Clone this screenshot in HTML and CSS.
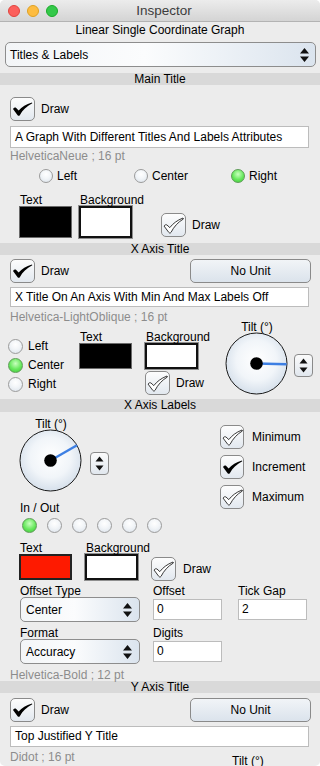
FILE: index.html
```html
<!DOCTYPE html>
<html>
<head>
  <title>Inspector</title>
  <link rel="stylesheet" href="styles.css">
</head>
<body>
  <div class="window">
    <div class="titlebar">
      <div class="lights">
        <span class="light red"></span>
        <span class="light yellow"></span>
        <span class="light green"></span>
      </div>
      <div class="wintitle">Inspector</div>
      <div></div>
    </div>
    <div class="subtitle">Linear Single Coordinate Graph</div>
    <div class="popup top-popup">
      <span>Titles &amp; Labels</span>
      <svg class="updown" width="9" height="14" viewBox="0 0 9 14"><path d="M4.5 0 L9 5.5 H0 Z M0 8.5 H9 L4.5 14 Z" fill="#111"/></svg>
    </div>

    <!-- Main Title -->
    <div class="section s-main">Main Title</div>
    <div class="draw-row r-main">
      <span class="chk">
        <svg width="21" height="16" viewBox="0 0 21 16"><path d="M1 8 C2 6.6 3 6.2 4 6.8 L6.6 9.6 C10 6 14 3.4 20 1.6 L20.3 2.3 C14.5 5.2 10.6 9.2 7.8 14.2 C7.3 15 6.2 15 5.6 14.2 Z" fill="#000"/></svg>
      </span>
      <span>Draw</span>
    </div>
    <div class="field f-main">A Graph With Different Titles And Labels Attributes</div>
    <div class="fontname fn-main">HelveticaNeue ; 16 pt</div>
    <div class="align-row">
      <span class="opt w95"><span class="radio"></span>Left</span>
      <span class="opt w97"><span class="radio"></span>Center</span>
      <span class="opt"><span class="radio on"></span>Right</span>
    </div>
    <div class="colors c-main">
      <div class="well-group"><div class="lbl">Text</div><div class="well black"></div></div>
      <div class="well-group"><div class="lbl">Background</div><div class="well white"></div></div>
      <div class="draw-inline d-main">
        <span class="chk">
          <svg width="21" height="17" viewBox="0 0 21 17"><path d="M1 9 C2 7.8 3 7.4 4 8 L6.8 10.6 C10 6.5 14 3.4 20 1 L20.4 2 C15 5.2 11 9.6 8 15.4 C7.5 16.2 6.4 16.2 5.8 15.4 Z" fill="#fff" stroke="#222" stroke-width="0.9"/></svg>
        </span>
        <span>Draw</span>
      </div>
    </div>

    <!-- X Axis Title -->
    <div class="section s-xtitle">X Axis Title</div>
    <div class="draw-row r-x">
      <div class="draw-inline">
        <span class="chk">
          <svg width="21" height="16" viewBox="0 0 21 16"><path d="M1 8 C2 6.6 3 6.2 4 6.8 L6.6 9.6 C10 6 14 3.4 20 1.6 L20.3 2.3 C14.5 5.2 10.6 9.2 7.8 14.2 C7.3 15 6.2 15 5.6 14.2 Z" fill="#000"/></svg>
        </span>
        <span>Draw</span>
      </div>
      <div class="btn">No Unit</div>
    </div>
    <div class="field f-x">X Title On An Axis With Min And Max Labels Off</div>
    <div class="fontname fn-x">Helvetica-LightOblique ; 16 pt</div>
    <div class="xtitle-row">
      <div class="radio-col">
        <span class="opt"><span class="radio"></span>Left</span>
        <span class="opt"><span class="radio on"></span>Center</span>
        <span class="opt"><span class="radio"></span>Right</span>
      </div>
      <div class="well-group g-text"><div class="lbl">Text</div><div class="well black small"></div></div>
      <div class="well-group g-bg">
        <div class="lbl">Background</div>
        <div class="well white small"></div>
        <div class="draw-inline d-x">
          <span class="chk">
            <svg width="21" height="17" viewBox="0 0 21 17"><path d="M1 9 C2 7.8 3 7.4 4 8 L6.8 10.6 C10 6.5 14 3.4 20 1 L20.4 2 C15 5.2 11 9.6 8 15.4 C7.5 16.2 6.4 16.2 5.8 15.4 Z" fill="#fff" stroke="#222" stroke-width="0.9"/></svg>
          </span>
          <span>Draw</span>
        </div>
      </div>
      <div class="tilt-group">
        <div class="tilt">
          <div class="lbl">Tilt (°)</div>
          <svg class="dial" width="63" height="63" viewBox="0 0 63 63">
            <defs>
              <radialGradient id="dg1" cx="50%" cy="45%" r="55%"><stop offset="0" stop-color="#ffffff"/><stop offset="0.6" stop-color="#f1f5f9"/><stop offset="1" stop-color="#d6e0eb"/></radialGradient>
            </defs>
            <circle cx="31.5" cy="31.5" r="30.5" fill="url(#dg1)" stroke="#1a1a1a" stroke-width="1"/>
            <line x1="31.5" y1="31.5" x2="61.5" y2="32.3" stroke="#3d7fe3" stroke-width="2.4"/>
            <circle cx="31.5" cy="31.5" r="6.3" fill="#000"/>
          </svg>
        </div>
        <span class="stepper">
          <svg width="9" height="15" viewBox="0 0 9 15"><path d="M4.5 0.5 L8.5 5.5 H0.5 Z M0.5 9.5 H8.5 L4.5 14.5 Z" fill="#111"/></svg>
        </span>
      </div>
    </div>

    <!-- X Axis Labels -->
    <div class="section s-xlabels">X Axis Labels</div>
    <div class="xlabels-row">
      <div class="xl-left">
        <div class="tilt-group tg-left">
          <div class="tilt">
            <div class="lbl">Tilt (°)</div>
            <svg class="dial" width="63" height="63" viewBox="0 0 63 63">
              <defs>
                <radialGradient id="dg2" cx="50%" cy="45%" r="55%"><stop offset="0" stop-color="#ffffff"/><stop offset="0.6" stop-color="#f1f5f9"/><stop offset="1" stop-color="#d6e0eb"/></radialGradient>
              </defs>
              <circle cx="31.5" cy="31.5" r="30.5" fill="url(#dg2)" stroke="#1a1a1a" stroke-width="1"/>
              <line x1="31.5" y1="31.5" x2="58" y2="16.2" stroke="#3d7fe3" stroke-width="2.4"/>
              <circle cx="31.5" cy="31.5" r="6.3" fill="#000"/>
            </svg>
          </div>
          <span class="stepper">
            <svg width="9" height="15" viewBox="0 0 9 15"><path d="M4.5 0.5 L8.5 5.5 H0.5 Z M0.5 9.5 H8.5 L4.5 14.5 Z" fill="#111"/></svg>
          </span>
        </div>
        <div class="inout">In / Out</div>
        <div class="dots">
          <span class="radio on"></span>
          <span class="radio"></span>
          <span class="radio"></span>
          <span class="radio"></span>
          <span class="radio"></span>
          <span class="radio"></span>
        </div>
      </div>
      <div class="xl-right">
        <div class="draw-inline">
          <span class="chk">
            <svg width="21" height="17" viewBox="0 0 21 17"><path d="M1 9 C2 7.8 3 7.4 4 8 L6.8 10.6 C10 6.5 14 3.4 20 1 L20.4 2 C15 5.2 11 9.6 8 15.4 C7.5 16.2 6.4 16.2 5.8 15.4 Z" fill="#fff" stroke="#222" stroke-width="0.9"/></svg>
          </span>
          <span>Minimum</span>
        </div>
        <div class="draw-inline">
          <span class="chk">
            <svg width="21" height="16" viewBox="0 0 21 16"><path d="M1 8 C2 6.6 3 6.2 4 6.8 L6.6 9.6 C10 6 14 3.4 20 1.6 L20.3 2.3 C14.5 5.2 10.6 9.2 7.8 14.2 C7.3 15 6.2 15 5.6 14.2 Z" fill="#000"/></svg>
          </span>
          <span>Increment</span>
        </div>
        <div class="draw-inline">
          <span class="chk">
            <svg width="21" height="17" viewBox="0 0 21 17"><path d="M1 9 C2 7.8 3 7.4 4 8 L6.8 10.6 C10 6.5 14 3.4 20 1 L20.4 2 C15 5.2 11 9.6 8 15.4 C7.5 16.2 6.4 16.2 5.8 15.4 Z" fill="#fff" stroke="#222" stroke-width="0.9"/></svg>
          </span>
          <span>Maximum</span>
        </div>
      </div>
    </div>
    <div class="colors c-labels">
      <div class="well-group"><div class="lbl">Text</div><div class="well red small"></div></div>
      <div class="well-group g-bg2"><div class="lbl">Background</div><div class="well white small"></div></div>
      <div class="draw-inline d-labels">
        <span class="chk">
          <svg width="21" height="17" viewBox="0 0 21 17"><path d="M1 9 C2 7.8 3 7.4 4 8 L6.8 10.6 C10 6.5 14 3.4 20 1 L20.4 2 C15 5.2 11 9.6 8 15.4 C7.5 16.2 6.4 16.2 5.8 15.4 Z" fill="#fff" stroke="#222" stroke-width="0.9"/></svg>
        </span>
        <span>Draw</span>
      </div>
    </div>
    <div class="form-grid">
      <div class="cell">
        <div class="lbl">Offset Type</div>
        <div class="popup small-popup">
          <span>Center</span>
          <svg class="updown" width="9" height="14" viewBox="0 0 9 14"><path d="M4.5 0 L9 5.5 H0 Z M0 8.5 H9 L4.5 14 Z" fill="#111"/></svg>
        </div>
      </div>
      <div class="cell">
        <div class="lbl">Offset</div>
        <div class="field small-field">0</div>
      </div>
      <div class="cell">
        <div class="lbl">Tick Gap</div>
        <div class="field small-field">2</div>
      </div>
      <div class="cell">
        <div class="lbl">Format</div>
        <div class="popup small-popup">
          <span>Accuracy</span>
          <svg class="updown" width="9" height="14" viewBox="0 0 9 14"><path d="M4.5 0 L9 5.5 H0 Z M0 8.5 H9 L4.5 14 Z" fill="#111"/></svg>
        </div>
      </div>
      <div class="cell">
        <div class="lbl">Digits</div>
        <div class="field small-field">0</div>
      </div>
    </div>
    <div class="fontname fn-labels">Helvetica-Bold ; 12 pt</div>

    <!-- Y Axis Title -->
    <div class="section s-ytitle">Y Axis Title</div>
    <div class="draw-row r-y">
      <div class="draw-inline">
        <span class="chk">
          <svg width="21" height="16" viewBox="0 0 21 16"><path d="M1 8 C2 6.6 3 6.2 4 6.8 L6.6 9.6 C10 6 14 3.4 20 1.6 L20.3 2.3 C14.5 5.2 10.6 9.2 7.8 14.2 C7.3 15 6.2 15 5.6 14.2 Z" fill="#000"/></svg>
        </span>
        <span>Draw</span>
      </div>
      <div class="btn">No Unit</div>
    </div>
    <div class="field f-y">Top Justified Y Title</div>
    <div class="last-row">
      <div class="fontname">Didot ; 16 pt</div>
      <div class="lbl tilt-y">Tilt (°)</div>
    </div>
  </div>
</body>
</html>
```

FILE: styles.css
```css
* {
  box-sizing: border-box;
}

body {
  margin: 0;
  background: #fff;
  font-family: "Liberation Sans", Arial, sans-serif;
  font-size: 12px;
  color: #000;
}

.window {
  width: 320px;
  height: 766px;
  background: #ececec;
  border-radius: 5px;
  overflow: hidden;
}

.titlebar {
  height: 22px;
  display: grid;
  grid-template-columns: 1fr auto 1fr;
  align-items: center;
  padding-left: 8px;
  background: linear-gradient(#ececec, #d4d4d4);
  border-bottom: 1px solid #b3b3b3;
}

.lights {
  display: flex;
  gap: 7px;
}

.light {
  width: 12px;
  height: 12px;
  border-radius: 50%;
}

.red { background: #fc605c; border: 1px solid #e0443e; }
.yellow { background: #fdbc40; border: 1px solid #dea123; }
.green { background: #34c84a; border: 1px solid #1aab29; }

.wintitle {
  font-size: 13.5px;
  color: #3c3c3c;
}

.subtitle {
  height: 16px;
  line-height: 16px;
  text-align: center;
}

.popup {
  display: flex;
  align-items: center;
  justify-content: space-between;
  height: 25px;
  padding: 0 6px 0 4px;
  border: 1px solid #8d8d8d;
  border-radius: 5px;
  background: linear-gradient(to right, #f3f5f7, #fbfcfd 45%, #dbe4ee);
}

.top-popup {
  margin: 4px 4px 0 5px;
}

.section {
  height: 12px;
  line-height: 12px;
  background: #d9d9d9;
  text-align: center;
}

.s-main { margin-top: 6px; }
.s-xtitle { margin-top: 5px; }
.s-xlabels { margin-top: 4px; height: 13px; line-height: 13px; }
.s-ytitle { margin-top: 0; }

.chk {
  display: flex;
  align-items: center;
  justify-content: center;
  width: 25px;
  height: 24px;
  border: 1px solid #8a8a8a;
  border-radius: 5px;
  background: linear-gradient(#fdfdfd, #e2e8ef);
  flex: none;
}

.draw-row {
  display: flex;
  align-items: center;
  justify-content: space-between;
  padding: 0 9px 0 10px;
}

.draw-row > span + span,
.draw-inline span + span {
  margin-left: 6px;
}

.draw-row.r-main {
  justify-content: flex-start;
  margin-top: 12px;
}

.r-x { margin-top: 4px; }
.r-y { margin-top: 5px; }

.draw-inline {
  display: flex;
  align-items: center;
  flex: none;
}

.btn {
  width: 121px;
  height: 24px;
  line-height: 22px;
  text-align: center;
  border: 1px solid #8a8a8a;
  border-radius: 5px;
  background: linear-gradient(#f1f4f7, #dbe3ec);
}

.field {
  background: #fff;
  border: 1px solid #bcbcbc;
  padding: 0 4px;
  white-space: nowrap;
  overflow: hidden;
}

.f-main {
  height: 22px;
  line-height: 20px;
  margin: 5px 11px 0 10px;
}

.f-x {
  height: 20px;
  line-height: 18px;
  margin: 4px 11px 0 10px;
}

.f-y {
  height: 21px;
  line-height: 19px;
  margin: 4px 11px 0 10px;
}

.fontname {
  color: #8c8c8c;
  line-height: 14px;
  padding-left: 10px;
}

.fn-main { margin-top: 1px; }
.fn-x { margin-top: 4px; line-height: 12px; }
.fn-labels { margin-top: 5px; line-height: 12px; }

.radio {
  display: inline-block;
  width: 14px;
  height: 14px;
  border-radius: 50%;
  border: 1px solid #9b9b9b;
  background: radial-gradient(circle at 50% 35%, #ffffff, #f2f5f8 45%, #d9e1ea);
  flex: none;
}

.radio.on {
  border-color: #5d9c56;
  background: radial-gradient(circle at 50% 35%, #c9ffbf, #66e85c 55%, #3fc53a);
}

.opt {
  display: flex;
  align-items: center;
  gap: 4px;
}

.align-row {
  display: flex;
  margin-top: 6px;
  padding-left: 39px;
  height: 14px;
}

.w95 { width: 95px; }
.w97 { width: 97px; }

.colors {
  display: flex;
  align-items: flex-end;
}

.c-main {
  margin-top: 11px;
  padding-left: 19px;
  gap: 7px;
}

.well-group {
  width: 53px;
  flex: none;
}

.lbl {
  line-height: 12px;
  padding-left: 1px;
  white-space: nowrap;
}

.well {
  width: 53px;
  height: 32px;
}

.well.small {
  height: 26px;
}

.well.black {
  background: #000;
  border: 1px solid #6a6a6a;
}

.well.white {
  background: #fff;
  border: 2px solid #111;
  box-shadow: 0 0 0 1px #8f8f8f;
}

.well.red {
  background: #fe1a00;
  border: 2px solid #222;
}

.d-main {
  margin-left: 22px;
  margin-bottom: 1px;
}

.xtitle-row {
  display: flex;
  margin-top: -3px;
}

.radio-col {
  display: flex;
  flex-direction: column;
  gap: 5px;
  width: 79px;
  flex: none;
  padding: 19px 0 0 8px;
}

.radio-col .radio {
  width: 15px;
  height: 15px;
}

.radio-col .opt {
  gap: 5px;
  height: 14px;
}

.g-text {
  padding-top: 11px;
}

.g-bg {
  margin-left: 13px;
  padding-top: 11px;
}

.d-x {
  margin-top: 2px;
}

.tilt-group {
  display: flex;
  align-items: center;
  margin-left: 27px;
  flex: none;
}

.tilt {
  display: flex;
  flex-direction: column;
  align-items: center;
}

.tilt .lbl {
  margin-bottom: -1px;
}

.dial {
  display: block;
}

.stepper {
  display: flex;
  align-items: center;
  justify-content: center;
  width: 19px;
  height: 23px;
  margin: 16px 0 0 6px;
  border: 1px solid #8a8a8a;
  border-radius: 4px;
  background: linear-gradient(#fbfbfb, #e1e7ee);
}

.xlabels-row {
  display: flex;
}

.xl-left {
  width: 220px;
  flex: none;
  padding-left: 19px;
}

.tg-left {
  margin: 6px 0 0 0;
}

.tg-left .stepper {
  margin-left: 8px;
}

.inout {
  line-height: 12px;
  margin-top: 10px;
  padding-left: 1px;
}

.dots {
  display: flex;
  gap: 10px;
  margin-top: 4px;
  padding-left: 3px;
}

.dots .radio {
  width: 15px;
  height: 15px;
}

.xl-right {
  display: flex;
  flex-direction: column;
  gap: 6px;
  padding-top: 13px;
}

.xl-right .chk {
  width: 24px;
  height: 24px;
}

.xl-right span + span {
  margin-left: 8px;
}

.c-labels {
  margin-top: 9px;
  padding-left: 19px;
}

.g-bg2 {
  margin-left: 13px;
}

.d-labels {
  margin-left: 13px;
  margin-bottom: -1px;
}

.d-labels span + span {
  margin-left: 7px;
}

.form-grid {
  display: grid;
  grid-template-columns: 133px 85px 69px;
  row-gap: 5px;
  margin-top: 5px;
  padding-left: 20px;
}

.cell .lbl {
  padding-left: 0;
}

.small-popup {
  width: 120px;
  height: 25px;
  padding: 0 7px 0 5px;
}

.small-field {
  width: 69px;
  height: 21px;
  line-height: 19px;
  margin-top: 2px;
  padding: 0 3px;
}

.last-row {
  display: flex;
  align-items: flex-start;
  margin-top: 3px;
}

.last-row .fontname {
  width: 231px;
}

.tilt-y {
  margin-top: 5px;
}
```
